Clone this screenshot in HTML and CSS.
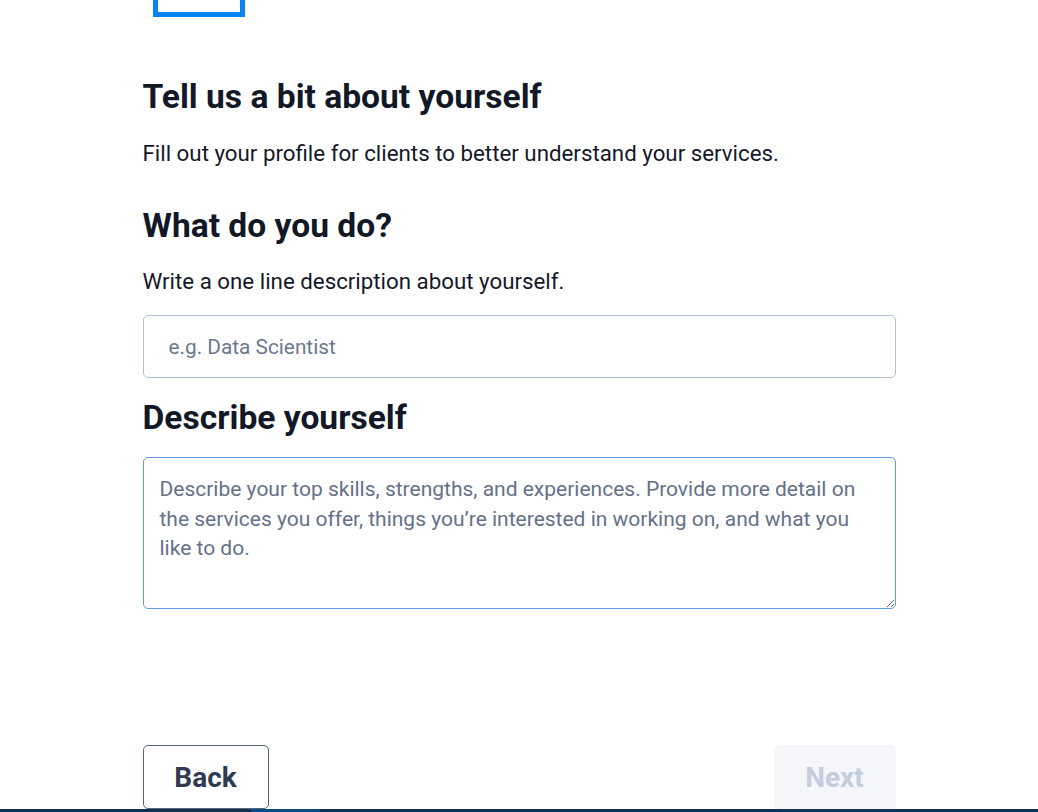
FILE: index.html
```html
<!DOCTYPE html>
<html lang="en">
<head>
<meta charset="utf-8">
<title>Tell us a bit about yourself</title>
<link rel="stylesheet" href="styles.css">
</head>
<body>
<div class="page">
  <header class="top">
    <div class="logo-box"></div>
  </header>
  <main class="content">
    <h1 class="title">Tell us a bit about yourself</h1>
    <p class="lead">Fill out your profile for clients to better understand your services.</p>
    <h2 class="section">What do you do?</h2>
    <p class="hint">Write a one line description about yourself.</p>
    <input class="field" type="text" placeholder="e.g. Data Scientist">
    <h2 class="section section-describe">Describe yourself</h2>
    <textarea class="area" placeholder="Describe your top skills, strengths, and experiences. Provide more detail on the services you offer, things you’re interested in working on, and what you like to do."></textarea>
    <div class="actions">
      <button class="btn btn-back" type="button">Back</button>
      <button class="btn btn-next" type="button" disabled>Next</button>
    </div>
  </main>
  <div class="progress"><div class="progress-fill"></div></div>
</div>
</body>
</html>
```
FILE: styles.css
```css
html, body {
  margin: 0;
  padding: 0;
  background: #ffffff;
}
body {
  font-family: Roboto, "Liberation Sans", Arial, sans-serif;
  color: #111827;
}
.page {
  height: 812px;
  display: flex;
  flex-direction: column;
  overflow: hidden;
}
.top {
  width: 753px;
  margin: 0 auto;
  height: 17px;
  display: flex;
  align-items: flex-end;
  overflow: hidden;
}
.logo-box {
  margin-left: 10px;
  width: 82px;
  height: 60px;
  border: 5px solid #0784f3;
  flex: none;
}
.content {
  width: 753px;
  margin: 0 auto;
  flex: 1;
  display: flex;
  flex-direction: column;
}
.title {
  margin: 60px 0 0;
  font-size: 33.6px;
  line-height: 40px;
  font-weight: 700;
  color: #111827;
}
.lead {
  margin: 19px 0 0;
  font-size: 22.3px;
  line-height: 34px;
  color: #15182a;
}
.section {
  margin: 36px 0 0;
  font-size: 33.6px;
  line-height: 40px;
  font-weight: 700;
  color: #111827;
}
.hint {
  margin: 18px 0 0;
  font-size: 22.3px;
  line-height: 34px;
  color: #15182a;
}
.field {
  margin-top: 17px;
  box-sizing: border-box;
  width: 100%;
  height: 63px;
  border: 1px solid #b3c0d8;
  border-radius: 5px;
  padding: 0 25px;
  font-family: inherit;
  font-size: 20.8px;
  color: #1a1d2b;
  outline: none;
}
.field::placeholder {
  color: #6b7890;
}
.section-describe {
  margin-top: 20px;
}
.area {
  margin-top: 19px;
  box-sizing: border-box;
  width: 100%;
  height: 152px;
  border: 1px solid #5d9be8;
  border-radius: 5px;
  padding: 17px 16px;
  font-family: inherit;
  font-size: 21px;
  line-height: 29.5px;
  color: #1a1d2b;
  resize: vertical;
  outline: none;
}
.area::placeholder {
  color: #64718a;
}
.actions {
  margin-top: auto;
  display: flex;
  justify-content: space-between;
  align-items: flex-end;
}
.btn {
  box-sizing: border-box;
  height: 64px;
  border-radius: 5px;
  font-family: inherit;
  font-size: 28px;
  font-weight: 700;
  cursor: pointer;
}
.btn-back {
  width: 126px;
  background: #ffffff;
  border: 1px solid #55647f;
  color: #2f3b52;
}
.btn-next {
  width: 122px;
  background: #f4f6f9;
  border: none;
  color: #c3cddc;
  cursor: default;
}
.progress {
  height: 3px;
  background: #12304f;
  flex: none;
  display: flex;
}
.progress-fill {
  margin-left: 251px;
  width: 69px;
  background: #0b4a82;
}
```
